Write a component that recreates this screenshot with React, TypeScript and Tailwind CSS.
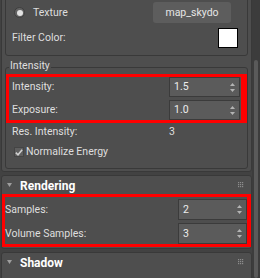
import React from "react";

function Arrows() {
  return (
    <svg width="5" height="9" viewBox="0 0 5 9" className="mr-[4px]">
      <polygon points="2.5,0 5,3 0,3" fill="#b4b4b4" />
      <polygon points="0,6 5,6 2.5,9" fill="#b4b4b4" />
    </svg>
  );
}

function Spinner({ value, className = "" }: { value: string; className?: string }) {
  return (
    <div
      className={`ml-auto flex items-center justify-between bg-[#5b5b5b] border border-[#3b3b3b] ${className}`}
    >
      <span className="pl-[4px] text-[#ededed]">{value}</span>
      <Arrows />
    </div>
  );
}

function Grip() {
  const dots = [0, 2, 4];
  return (
    <svg width="6" height="6" viewBox="0 0 6 6" className="ml-auto mr-[7px]">
      {dots.map((y) =>
        dots.map((x) => <rect key={`${x}-${y}`} x={x} y={y} width="1.2" height="1.2" fill="#8c8c8c" />)
      )}
    </svg>
  );
}

function RolloutHeader({ title }: { title: string }) {
  return (
    <div className="flex items-center h-[18px]">
      <svg width="5" height="4" viewBox="0 0 5 4" className="ml-[5px]">
        <polygon points="0,0 5,0 2.5,4" fill="#9e9e9e" />
      </svg>
      <span className="ml-[8px] pt-[2px] text-[12px] leading-[12px] font-bold text-white">{title}</span>
      <Grip />
    </div>
  );
}

export default function App() {
  return (
    <div
      className="flex w-[260px] h-[278px] overflow-hidden bg-[#424242] text-[10.5px] leading-[12px] text-[#dedede]"
      style={{ fontFamily: "Roboto, 'Liberation Sans', sans-serif" }}
    >
      <div className="w-[252px] flex flex-col">
        {/* scrolled rollout */}
        <div className="ml-[1px] w-[251px] mt-[-8px] bg-[#4e4e4e] border border-[#393939] rounded-[3px] pb-[2px]">
          <div className="ml-[3px] mt-[3px] w-[243px] border border-[#393939] rounded-[3px] pt-[5px] pb-[7px] pl-[6px] pr-[9px]">
            <div className="flex items-center h-[21px]">
              <div className="ml-[2px] w-[11px] h-[11px] rounded-full bg-[#626262] border border-[#3e3e3e] flex items-center justify-center">
                <div className="w-[6px] h-[6px] rounded-full bg-[#e2e2e2]" />
              </div>
              <span className="ml-[8px]">Texture</span>
              <div className="ml-auto mr-[7px] w-[78px] h-[21px] rounded-[3px] bg-[#5d5d5d] flex items-center justify-center text-[#e6e6e6]">
                map_skydo
              </div>
            </div>
            <div className="flex items-center h-[20px] mt-[5px]">
              <span>Filter Color:</span>
              <div className="ml-auto w-[20px] h-[20px] bg-white border border-black" />
            </div>
          </div>

          <div className="relative ml-[3px] mt-[11px] w-[243px] border border-[#393939] rounded-[3px] pt-[6px] pb-[8px]">
            <span className="absolute left-[3px] top-[-8px] px-[1px] bg-[#4e4e4e]">Intensity</span>
            <div className="flex flex-col gap-[3px] border-[3px] border-l-[3px] border-r-[6px] border-[#ff0000] pl-[3px] pr-[1px]">
              <div className="flex items-center h-[20px]">
                <span>Intensity:</span>
                <Spinner value="1.5" className="w-[71px] h-[20px]" />
              </div>
              <div className="flex items-center h-[20px]">
                <span>Exposure:</span>
                <Spinner value="1.0" className="w-[71px] h-[20px]" />
              </div>
            </div>
            <div className="flex items-center h-[16px] mt-[1px] pl-[6px]">
              <span className="w-[157px]">Res. Intensity:</span>
              <span>3</span>
            </div>
            <div className="flex items-center h-[16px] mt-[4px] pl-[8px]">
              <div className="w-[10px] h-[10px] bg-[#5e5e5e] border border-[#444] flex items-center justify-center">
                <svg width="8" height="7" viewBox="0 0 8 7">
                  <path d="M0.8 3.6 L3 5.8 L7.2 0.8" stroke="#d0d0d0" strokeWidth="1.6" fill="none" />
                </svg>
              </div>
              <span className="ml-[2px]">Normalize Energy</span>
            </div>
          </div>
        </div>

        {/* Rendering rollout */}
        <div className="ml-[1px] w-[251px] mt-[3px] bg-[#4e4e4e] border border-[#393939] rounded-[3px] pb-[1px]">
          <RolloutHeader title="Rendering" />
          <div className="flex flex-col gap-[3px] border-[3px] border-r-[4px] border-[#ff0000] pt-[2px]">
            <div className="flex items-center h-[21px]">
              <span>Samples:</span>
              <Spinner value="2" className="w-[69px] h-[21px]" />
            </div>
            <div className="flex items-center h-[21px]">
              <span>Volume Samples:</span>
              <Spinner value="3" className="w-[69px] h-[21px]" />
            </div>
          </div>
        </div>

        {/* Shadow rollout */}
        <div className="ml-[1px] w-[251px] mt-[3px] h-[40px] shrink-0 bg-[#4e4e4e] border border-[#393939] rounded-[3px]">
          <RolloutHeader title="Shadow" />
        </div>
      </div>

      {/* scrollbar */}
      <div className="w-[8px] bg-[#3c3c3c] flex flex-col">
        <div className="mt-[60px] ml-[2px] w-[4px] flex-1 rounded-[2px] bg-[#5a5a5a]" />
      </div>
    </div>
  );
}
